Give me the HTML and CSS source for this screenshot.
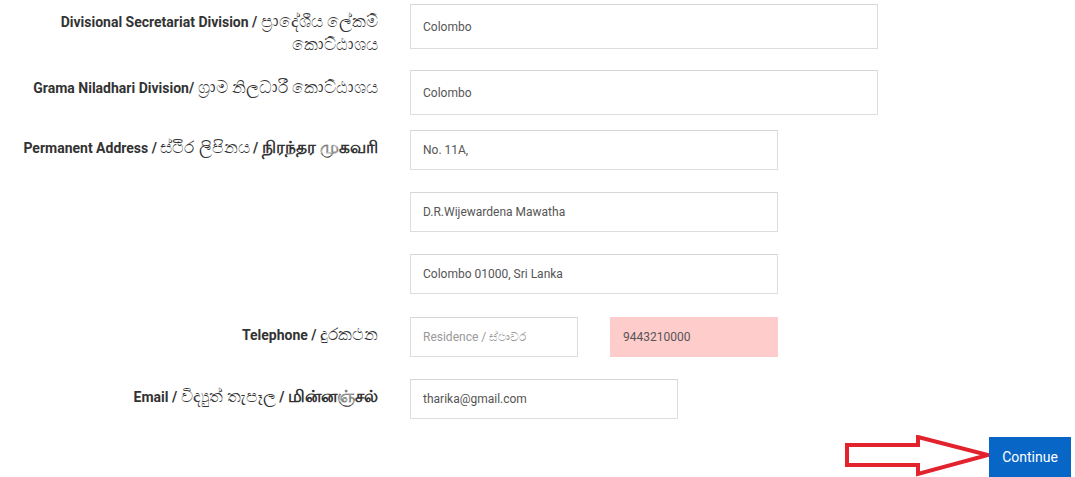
FILE: index.html
```html
<!DOCTYPE html>
<html lang="en">
<head>
<meta charset="utf-8">
<title>Registration form</title>
<link rel="stylesheet" href="styles.css">
</head>
<body>
<form class="form">
  <div class="row row-a">
    <label class="label">Divisional Secretariat Division / <span class="si">ප්‍රාදේශීය ලේකම් කොට්ඨාශය</span></label>
    <div class="field"><input class="input input-lg input-wide" type="text" value="Colombo"></div>
  </div>
  <div class="row row-b">
    <label class="label">Grama Niladhari Division/ <span class="si">ග්‍රාම නිලධාරී කොට්ඨාශය</span></label>
    <div class="field"><input class="input input-lg input-wide" type="text" value="Colombo"></div>
  </div>
  <div class="row row-addr">
    <label class="label">Permanent Address / <span class="si">ස්ථිර ලිපිනය</span> / <span class="ta">நிரந்தர முகவரி</span></label>
    <div class="field field-stack">
      <input class="input input-md" type="text" value="No. 11A,">
      <input class="input input-md" type="text" value="D.R.Wijewardena Mawatha">
      <input class="input input-md" type="text" value="Colombo 01000, Sri Lanka">
    </div>
  </div>
  <div class="row">
    <label class="label">Telephone / <span class="si">දුරකථන</span></label>
    <div class="field field-pair">
      <input class="input input-sm" type="text" placeholder="Residence / ස්ථාවර">
      <input class="input input-sm input-error" type="text" value="9443210000">
    </div>
  </div>
  <div class="row row-last">
    <label class="label">Email / <span class="si">විද්‍යුත් තැපෑල</span> / <span class="ta">மின்னஞ்சல்</span></label>
    <div class="field"><input class="input input-email" type="text" value="tharika@gmail.com"></div>
  </div>
  <div class="actions">
    <svg class="arrow" width="146" height="42" viewBox="0 0 146 42" aria-hidden="true">
      <polygon points="3,10 74,10 74,2 144,20 74,39 74,30 3,30" fill="#fff" stroke="#e2222c" stroke-width="4" stroke-linejoin="miter"/>
    </svg>
    <button class="btn" type="button">Continue</button>
  </div>
</form>
</body>
</html>
```
FILE: styles.css
```css
html, body {
  margin: 0;
  padding: 0;
  background: #fff;
}

body {
  font-family: Roboto, "Noto Sans", "DejaVu Sans", sans-serif;
  color: #333;
  overflow: hidden;
}

.form {
  display: flex;
  flex-direction: column;
  padding: 4px 4px 0 8px;
}

.row {
  display: flex;
  align-items: flex-start;
  gap: 32px;
  margin-bottom: 22px;
}

.row-a { margin-bottom: 13px; }
.row-b { margin-bottom: 15px; }
.row-addr { margin-bottom: 23px; }
.row-last { margin-bottom: 18px; }

.label {
  width: 370px;
  flex: 0 0 370px;
  box-sizing: border-box;
  padding-top: 7px;
  text-align: right;
  font-size: 14px;
  font-weight: 700;
  line-height: 23px;
  color: #333;
}

.si {
  font-size: 17px;
  font-weight: 400;
  line-height: 1;
}

.ta {
  font-size: 17px;
  line-height: 1;
}

.field {
  display: flex;
}

.field-stack {
  flex-direction: column;
  gap: 22px;
}

.field-pair {
  gap: 32px;
}

.input {
  box-sizing: border-box;
  height: 40px;
  border: 1px solid #ddd;
  border-top-color: #d6d6d6;
  background: #fff;
  padding: 0 12px;
  font-family: Roboto, "Noto Sans", sans-serif;
  font-size: 12px;
  color: #555;
  outline: none;
  margin: 0;
}

.input::placeholder {
  color: #999;
}

.input-lg { height: 45px; }
.input-wide { width: 468px; }
.input-md { width: 368px; }
.input-sm { width: 168px; }
.input-email { width: 268px; }

.input-error {
  background: #ffcccc;
  border-color: #ffcccc;
}

.actions {
  display: flex;
  justify-content: flex-end;
  align-items: flex-start;
}

.arrow {
  display: block;
  margin-top: -2px;
  margin-right: -1px;
}

.btn {
  width: 82px;
  height: 40px;
  border: 0;
  background: #0866c6;
  color: #fff;
  font-family: Roboto, "Noto Sans", sans-serif;
  font-size: 14px;
  padding: 0;
  cursor: pointer;
}
```
